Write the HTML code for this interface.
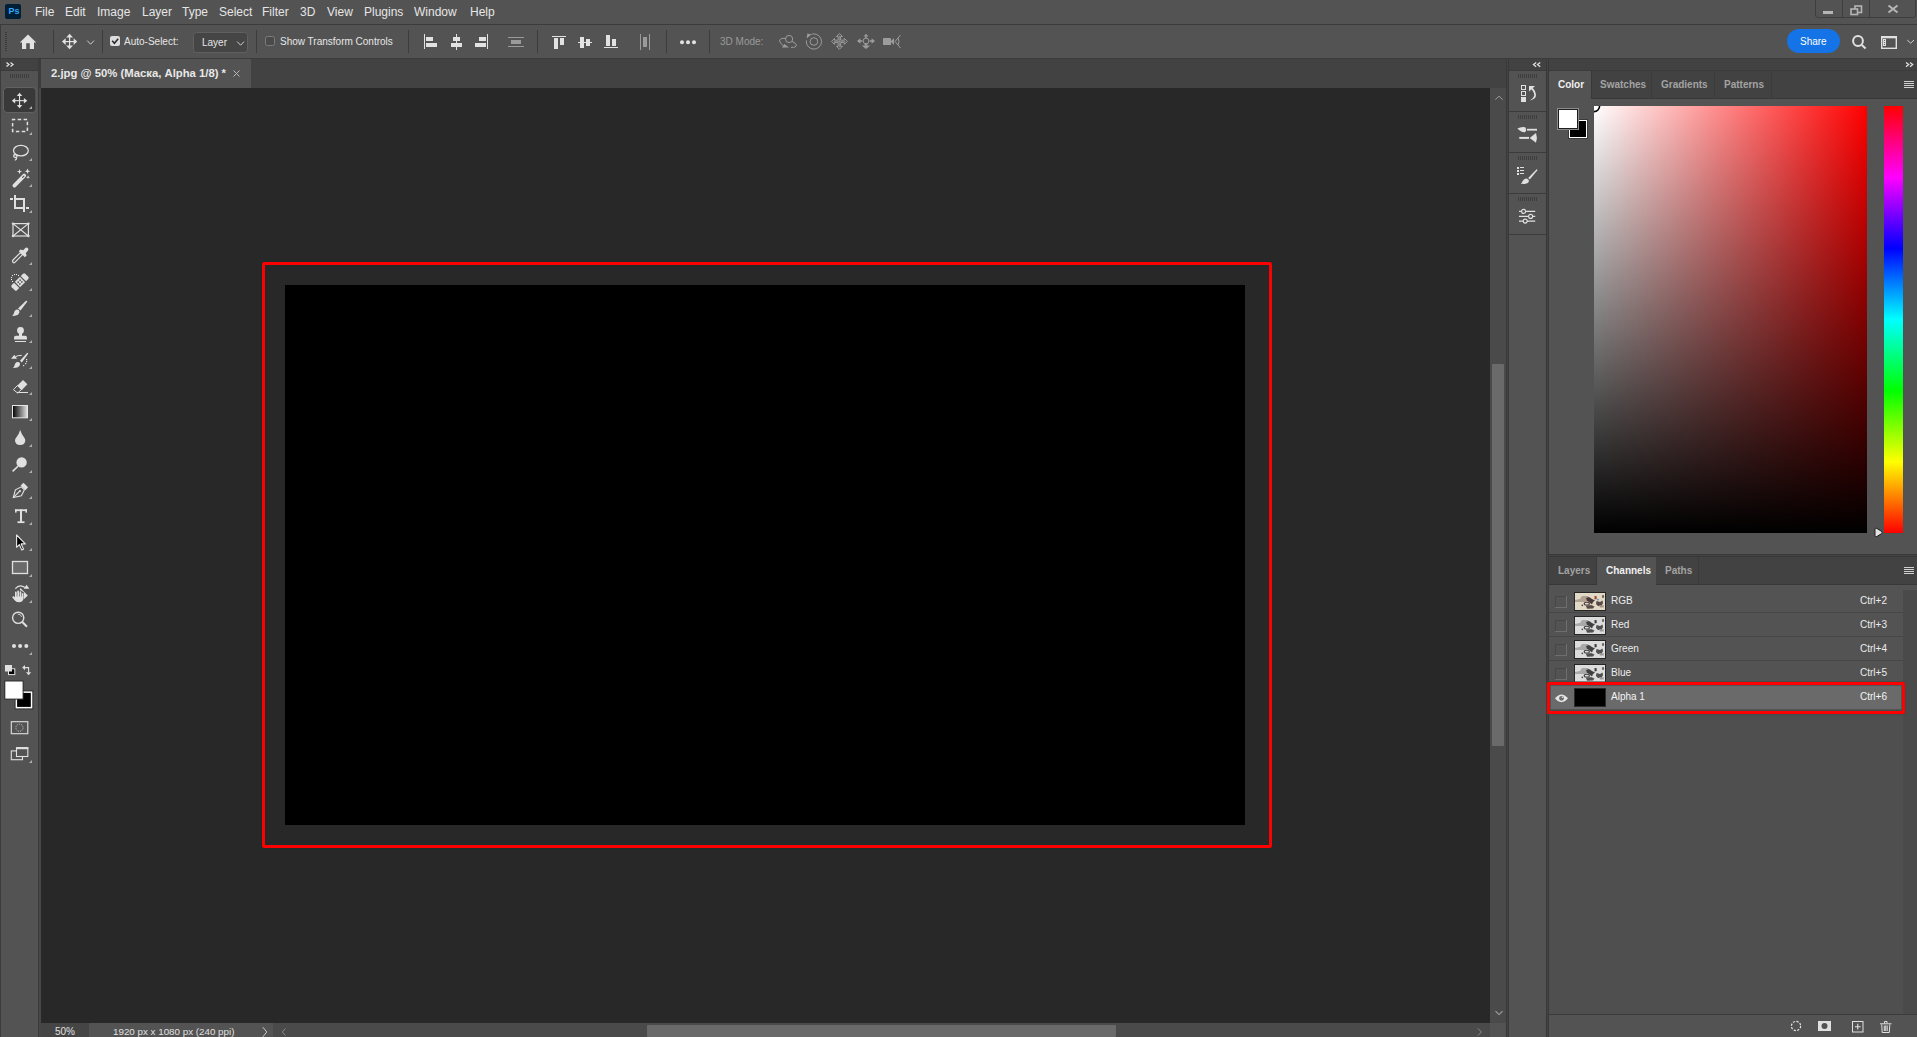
<!DOCTYPE html>
<html><head><meta charset="utf-8">
<style>
*{margin:0;padding:0;box-sizing:border-box}
html,body{width:1917px;height:1037px;overflow:hidden;background:#3b3b3b;font-family:"Liberation Sans",sans-serif;position:relative}
.a{position:absolute}
.t{position:absolute;white-space:nowrap;line-height:1}
svg{position:absolute;overflow:visible}
.menu{top:6px;font-size:12px;color:#e6e6e6}
</style></head><body>
<!-- MENU BAR -->
<div class="a" style="left:0;top:0;width:1917px;height:24px;background:#535353"></div>
<div class="a" style="left:0;top:24px;width:1917px;height:1px;background:#3b3b3b"></div>
<!-- MENU CONTENT -->
<div class="a" style="left:5px;top:4px;width:16px;height:15px;background:#001e36;border-radius:2px"></div>
<div class="t" style="left:8.6px;top:7px;font-size:9px;font-weight:bold;color:#31a8ff;letter-spacing:-0.1px">Ps</div>
<div class="t menu" style="left:35px">File</div>
<div class="t menu" style="left:65px">Edit</div>
<div class="t menu" style="left:97px">Image</div>
<div class="t menu" style="left:142px">Layer</div>
<div class="t menu" style="left:182px">Type</div>
<div class="t menu" style="left:219px">Select</div>
<div class="t menu" style="left:262px">Filter</div>
<div class="t menu" style="left:300px">3D</div>
<div class="t menu" style="left:327px">View</div>
<div class="t menu" style="left:364px">Plugins</div>
<div class="t menu" style="left:414px">Window</div>
<div class="t menu" style="left:470px">Help</div>
<!-- OPTIONS BAR -->
<div class="a" style="left:0;top:25px;width:1917px;height:33px;background:#535353"></div>
<div class="a" style="left:0;top:25px;width:1px;height:33px;background:#3b3b3b"></div>
<div class="a" style="left:0;top:58px;width:1917px;height:1px;background:#3b3b3b"></div>
<!-- OPTIONS CONTENT -->
<svg style="left:0;top:0" width="1917" height="58">
<g fill="#3a3a3a">
<rect x="5" y="32" width="2" height="1"/><rect x="5" y="34" width="2" height="1"/><rect x="5" y="36" width="2" height="1"/><rect x="5" y="38" width="2" height="1"/><rect x="5" y="40" width="2" height="1"/><rect x="5" y="42" width="2" height="1"/><rect x="5" y="44" width="2" height="1"/><rect x="5" y="46" width="2" height="1"/><rect x="5" y="48" width="2" height="1"/><rect x="5" y="50" width="2" height="1"/>
</g>
<polygon fill="#e2e2e2" points="28,34.5 36.2,42.6 34,42.6 34,49 29.8,49 29.8,43.2 26.2,43.2 26.2,49 22,49 22,42.6 19.8,42.6"/>
<g fill="#3c3c3c"><rect x="53" y="30" width="1" height="23"/><rect x="102" y="30" width="1" height="23"/><rect x="256" y="30" width="1" height="23"/><rect x="408" y="30" width="1" height="23"/><rect x="537" y="30" width="1" height="23"/><rect x="666" y="30" width="1" height="23"/><rect x="709" y="30" width="1" height="23"/></g>
<g fill="#e2e2e2">
<rect x="69" y="36" width="1.2" height="11"/><rect x="64" y="41" width="11" height="1.2"/>
<polygon points="69.6,33.8 73,37.4 66.2,37.4"/><polygon points="69.6,49.2 73,45.6 66.2,45.6"/>
<polygon points="62,41.6 65.6,38.2 65.6,45"/><polygon points="77.2,41.6 73.6,38.2 73.6,45"/>
</g>
<polyline points="87.2,40.6 90.6,44.2 94,40.6" fill="none" stroke="#cfcfcf" stroke-width="1"/>
<rect x="110" y="36" width="10" height="10" rx="2" fill="#dcdcdc"/>
<polyline points="112.2,40.8 114.4,43.2 118.2,38.8" fill="none" stroke="#2a2a2a" stroke-width="1.6"/>
<rect x="193.5" y="32.5" width="54" height="20" rx="3" fill="#454545" stroke="#606060" stroke-width="1"/>
<polyline points="237.2,41.6 240.6,45.2 244,41.6" fill="none" stroke="#cfcfcf" stroke-width="1"/>
<rect x="265.5" y="36.5" width="9" height="9" rx="2" fill="#4a4a4a" stroke="#7c7c7c" stroke-width="1"/>
<g fill="#e2e2e2">
<rect x="424" y="34" width="1" height="15"/><rect x="426" y="37" width="7" height="4"/><rect x="426" y="43" width="11" height="4"/>
<rect x="456" y="34" width="1" height="16"/><rect x="453" y="37" width="7" height="4"/><rect x="451" y="43" width="11" height="4"/>
<rect x="487" y="34" width="1" height="15"/><rect x="479" y="37" width="7" height="4"/><rect x="475" y="43" width="11" height="4"/>
<rect x="552" y="36" width="14" height="1"/><rect x="554" y="38" width="4" height="11"/><rect x="560" y="38" width="4" height="7"/>
<rect x="578" y="42" width="14" height="1"/><rect x="580" y="37" width="4" height="11"/><rect x="586" y="39" width="4" height="7"/>
<rect x="606" y="35" width="4" height="11"/><rect x="612" y="39" width="4" height="7"/><rect x="604" y="47" width="14" height="1"/>
<circle cx="682" cy="42.2" r="2"/><circle cx="688" cy="42.2" r="2"/><circle cx="694" cy="42.2" r="2"/>
</g>
<g fill="#9a9a9a">
<rect x="508" y="37" width="16" height="1"/><rect x="511" y="40" width="10" height="4"/><rect x="508" y="46" width="16" height="1"/>
<rect x="640" y="34" width="1" height="16"/><rect x="649" y="34" width="1" height="16"/><rect x="643" y="37" width="4" height="10"/>
</g>
</svg>
<div class="t" style="left:124px;top:37px;font-size:10px;color:#e6e6e6">Auto-Select:</div>
<div class="t" style="left:202px;top:38px;font-size:10px;color:#e6e6e6">Layer</div>
<div class="t" style="left:280px;top:37px;font-size:10px;color:#e6e6e6">Show Transform Controls</div>
<div class="t" style="left:720px;top:37px;font-size:10px;color:#9a9a9a">3D Mode:</div>
<!-- WINDOW CONTROLS & RIGHT OPTS -->
<svg style="left:0;top:0" width="1917" height="58">
<path d="M1815.5,0 V15 Q1815.5,17.5 1818,17.5 H1913 Q1915.5,17.5 1915.5,15 V0" fill="none" stroke="#3e3e3e" stroke-width="1"/>
<rect x="1842" y="0" width="1" height="18" fill="#3e3e3e"/><rect x="1869" y="0" width="1" height="18" fill="#3e3e3e"/>
<rect x="1823" y="11" width="10" height="3" fill="#b5b5b5"/>
<rect x="1855" y="6" width="6.5" height="6.5" fill="none" stroke="#b5b5b5" stroke-width="1.6"/>
<rect x="1851" y="9" width="6.5" height="5.5" fill="#535353" stroke="#b5b5b5" stroke-width="1.6"/>
<path d="M1888.5,5.5 L1897.5,12.5 M1897.5,5.5 L1888.5,12.5" stroke="#b5b5b5" stroke-width="2"/>
<rect x="1787" y="29" width="53" height="24" rx="12" fill="#1473e6"/>
<circle cx="1858" cy="41" r="4.9" fill="none" stroke="#e0e0e0" stroke-width="2"/>
<path d="M1861.8,45 L1865.6,48.6" stroke="#e0e0e0" stroke-width="2"/>
<rect x="1881.7" y="36.7" width="14.6" height="11.6" fill="none" stroke="#e0e0e0" stroke-width="1.4"/>
<rect x="1881" y="36" width="16" height="2.3" fill="#e0e0e0"/>
<rect x="1883" y="39" width="3" height="7" fill="#e0e0e0"/>
<g fill="#535353"><circle cx="1884.5" cy="40.5" r="0.6"/><circle cx="1884.5" cy="42.5" r="0.6"/><circle cx="1884.5" cy="44.5" r="0.6"/></g>
<polyline points="1907.2,40 1910.6,43.2 1914,40" fill="none" stroke="#cfcfcf" stroke-width="1"/>
</svg>
<div class="t" style="left:1800px;top:37px;font-size:10px;color:#ffffff">Share</div>
<!-- 3D ICONS -->
<svg style="left:0;top:0" width="1917" height="58">
<g fill="none" stroke="#9c9c9c" stroke-width="1">
<circle cx="789.1" cy="39" r="3.6"/>
<path d="M785.6,38.4 Q780,37.8 779.6,40.8 Q779.8,43.2 783.2,45.4"/>
<path d="M791,47.4 Q796.6,47.6 796.4,45 Q796,43.2 792,41.4"/>
<circle cx="813.9" cy="41.5" r="7.6" stroke-dasharray="25 8 14.75 0"/>
<circle cx="813.9" cy="41.5" r="3.8"/>
<path d="M839.4,33.5 L842.4,36.5 L840.6,36.5 L840.6,40.2 L844.3,40.2 L844.3,38.4 L847.3,41.4 L844.3,44.4 L844.3,42.6 L840.6,42.6 L840.6,46.3 L842.4,46.3 L839.4,49.3 L836.4,46.3 L838.2,46.3 L838.2,42.6 L834.5,42.6 L834.5,44.4 L831.5,41.4 L834.5,38.4 L834.5,40.2 L838.2,40.2 L838.2,36.5 L836.4,36.5 Z"/>
<path d="M839.4,35.5 V47.3 M833.5,41.4 H845.3" stroke-width="0.7"/>
<circle cx="866" cy="41" r="2.9"/>
<path d="M895,41.5 L900.5,35 M895,41.5 L900.5,48 M898,38 Q900,41.5 898,45" />
</g>
<g fill="#9c9c9c">
<polygon points="782,47.6 789,47.6 784.4,44"/>
<polygon points="806.6,38.6 811.4,34.6 807.4,33.6"/>
<polygon points="866,33.8 868.4,36.6 863.6,36.6"/><rect x="865.2" y="36.4" width="1.6" height="1.6"/>
<polygon points="857,41 860.4,38.2 860.4,43.8"/><rect x="860" y="40.2" width="2.4" height="1.6"/>
<polygon points="875,41 871.6,38.2 871.6,43.8"/><rect x="869.6" y="40.2" width="2.4" height="1.6"/>
<polygon points="866,49 861.8,45.4 870.2,45.4"/><rect x="864.6" y="43.6" width="2.8" height="2"/>
<rect x="883" y="38" width="8" height="7" rx="0.6"/>
<polygon points="890.6,41.5 894,38 894,45"/>
</g>
</svg>
<!-- LEFT TOOLBAR -->
<div class="a" style="left:0;top:58px;width:41px;height:979px;background:#3b3b3b"></div>
<div class="a" style="left:1px;top:59px;width:37px;height:11px;background:#424242"></div>
<div class="a" style="left:1px;top:71px;width:37px;height:966px;background:#535353"></div>
<!-- TOOLBAR CONTENT -->
<svg style="left:0;top:0" width="41" height="1037">
<g fill="none" stroke="#e0e0e0" stroke-width="1.3"><polyline points="6.5,62.5 9,64.5 6.5,66.5"/><polyline points="10.5,62.5 13,64.5 10.5,66.5"/></g>
<g fill="#3e3e3e"><rect x="10" y="74" width="1" height="4"/><rect x="12" y="74" width="1" height="4"/><rect x="14" y="74" width="1" height="4"/><rect x="16" y="74" width="1" height="4"/><rect x="18" y="74" width="1" height="4"/><rect x="20" y="74" width="1" height="4"/><rect x="22" y="74" width="1" height="4"/><rect x="24" y="74" width="1" height="4"/><rect x="26" y="74" width="1" height="4"/><rect x="28" y="74" width="1" height="4"/></g>
<rect x="3.5" y="87.5" width="32.5" height="25" rx="3.5" fill="#393939" stroke="#626262" stroke-width="1"/>
<!-- triangles -->
<g fill="#b0b0b0">
<polygon points="32,106 32,109 29,109"/>
<polygon points="32,132 32,135 29,135"/>
<polygon points="32,158 32,161 29,161"/>
<polygon points="32,184 32,187 29,187"/>
<polygon points="32,210 32,213 29,213"/>
<polygon points="32,262 32,265 29,265"/>
<polygon points="32,288 32,291 29,291"/>
<polygon points="32,314 32,317 29,317"/>
<polygon points="32,340 32,343 29,343"/>
<polygon points="32,366 32,369 29,369"/>
<polygon points="32,392 32,395 29,395"/>
<polygon points="32,418 32,421 29,421"/>
<polygon points="32,444 32,447 29,447"/>
<polygon points="32,470 32,473 29,473"/>
<polygon points="32,496 32,499 29,499"/>
<polygon points="32,522 32,525 29,525"/>
<polygon points="32,548 32,551 29,551"/>
<polygon points="32,574 32,577 29,577"/>
<polygon points="32,600 32,603 29,603"/>
<polygon points="32,652 32,655 29,655"/>
<polygon points="32,760 32,763 29,763"/>
</g>
<g fill="#e0e0e0" stroke="none">
<!-- move -->
<rect x="19" y="95" width="1.1" height="11"/><rect x="14.5" y="100.1" width="10" height="1.1"/>
<polygon points="19.55,92.8 22.3,96.1 16.8,96.1"/><polygon points="19.55,108.2 22.3,105.1 16.8,105.1"/>
<polygon points="11.8,100.65 15.2,97.9 15.2,103.4"/><polygon points="27.3,100.65 23.9,97.9 23.9,103.4"/>
</g>
<!-- marquee -->
<rect x="12.6" y="119.6" width="14.8" height="11.8" fill="none" stroke="#e0e0e0" stroke-width="1.5" stroke-dasharray="3.5,2.4" stroke-dashoffset="0.8"/>
<!-- lasso -->
<g fill="none" stroke="#e0e0e0" stroke-width="1.3">
<ellipse cx="20.9" cy="150.6" rx="7.4" ry="5.3"/>
<path d="M15.5,154.5 C13,154.5 13,157.5 15.5,157.5 C17.5,157.5 17.5,155 15.8,155.5 M16.2,157.2 C17.2,158.2 16.2,160 14.8,160"/>
</g>
<!-- magic wand -->
<g fill="#e0e0e0">
<path d="M14.4,185.6 L24.2,175.6" stroke="#e0e0e0" stroke-width="3.8" stroke-linecap="round"/>
<path d="M19.5,169 L20.2,171 L22.2,171.6 L20.2,172.2 L19.5,174.2 L18.8,172.2 L16.8,171.6 L18.8,171 Z"/>
<path d="M27.5,168.6 L28.3,170.6 L30.3,171.3 L28.3,172 L27.5,174 L26.7,172 L24.7,171.3 L26.7,170.6 Z"/>
<path d="M28,175.3 L28.6,176.7 L30,177.2 L28.6,177.7 L28,179.1 L27.4,177.7 L26,177.2 L27.4,176.7 Z"/>
</g>
<path d="M22.6,177.4 L23.9,176.1" stroke="#535353" stroke-width="1.1" stroke-linecap="round"/>
<!-- crop -->
<g fill="#e0e0e0">
<rect x="10" y="198" width="3" height="2"/><rect x="14" y="195" width="2" height="14"/><rect x="14" y="207" width="11" height="2"/>
<rect x="16" y="198" width="9" height="2"/><rect x="23" y="198" width="2" height="14"/><rect x="26" y="207" width="3" height="2"/>
</g>
<!-- frame -->
<g fill="none" stroke="#e0e0e0" stroke-width="1.2"><rect x="13" y="223.6" width="15.4" height="12.4"/><path d="M13,223.6 L28.4,236 M28.4,223.6 L13,236"/></g>
<g fill="#e0e0e0"><circle cx="13" cy="223.6" r="1.2"/><circle cx="28.4" cy="223.6" r="1.2"/><circle cx="13" cy="236" r="1.2"/><circle cx="28.4" cy="236" r="1.2"/></g>
<!-- eyedropper -->
<path d="M13.2,262.5 Q12,261.2 13,260 L20.5,252.5 L22.6,254.6 L15.1,262.1 Q14.1,263.3 13.2,262.5 Z" fill="none" stroke="#e0e0e0" stroke-width="1.2"/>
<g fill="#e0e0e0"><path d="M18.8,251.2 L20.6,249.4 L23.2,250.2 L25.1,248.3 Q26.8,247 27.9,248.2 Q29,249.3 27.7,251 L25.8,252.9 L26.6,255.5 L24.8,257.3 Z"/></g>
<!-- healing -->
<g transform="rotate(-45 20 282)">
<rect x="10.5" y="278.3" width="19" height="7.4" rx="1.5" fill="#e0e0e0"/>
<rect x="15.3" y="277.5" width="1.2" height="9" fill="#535353"/><rect x="23.5" y="277.5" width="1.2" height="9" fill="#535353"/>
<g fill="#535353"><circle cx="18.6" cy="280.8" r="0.9"/><circle cx="21.4" cy="280.8" r="0.9"/><circle cx="18.6" cy="283.2" r="0.9"/><circle cx="21.4" cy="283.2" r="0.9"/></g>
</g>
<g fill="#ececec"><rect x="12.0" y="275.0" width="1" height="1"/><rect x="14.0" y="274.0" width="1" height="1"/><rect x="16.0" y="274.0" width="1" height="1"/><rect x="18.0" y="275.0" width="1" height="1"/><rect x="11.0" y="277.0" width="1" height="1"/><rect x="11.0" y="279.0" width="1" height="1"/><rect x="12.0" y="281.0" width="1" height="1"/></g>
<!-- brush -->
<g fill="#e0e0e0">
<path d="M18,308.6 L26,300.8 Q27.4,300.6 27.2,301.8 L20.5,310.6 Z"/>
<path d="M17.4,309.6 Q19.8,310 19.4,312.2 Q18.8,315.2 15,315.7 L12,315.9 Q13.4,315 13.9,313.3 Q14.8,309.4 17.4,309.6 Z"/>
</g>
<!-- stamp -->
<g fill="#e0e0e0">
<circle cx="20.5" cy="330.5" r="3.4"/><rect x="19" y="332" width="3" height="4"/>
<path d="M14,337.6 Q14,335.8 16,335.8 L25,335.8 Q27,335.8 27,337.6 L27,339.6 L14,339.6 Z"/>
<rect x="15" y="341" width="11" height="1"/>
</g>
<!-- history brush -->
<g fill="#e0e0e0">
<path d="M20,360.8 L27,352.9 Q28.3,352.7 28,354 L21.8,362.4 Z"/>
<path d="M17.8,361.9 Q20.4,362.2 20,364.4 Q19.3,367.4 15.6,367.8 L12.8,368 Q14,367 14.5,365.4 Q15.3,361.7 17.8,361.9 Z"/>
<polygon points="11,358.7 17,358.7 14.4,354.8"/>
<rect x="26" y="359" width="1.2" height="1.2"/><rect x="26" y="361" width="1.2" height="1.2"/><rect x="25" y="363" width="1.2" height="1.2"/><rect x="23" y="365" width="1.2" height="1.2"/>
</g>
<path d="M15.6,356.6 Q17.6,355.3 21.8,355.4" fill="none" stroke="#e0e0e0" stroke-width="1"/>
<!-- eraser -->
<path d="M13.4,389.6 L17.6,385.4 L21.6,389.4 L17.6,393 Z" fill="none" stroke="#e0e0e0" stroke-width="1"/>
<path d="M17.2,385.8 L23,380 L27.4,384.2 L21.6,390.2 Z" fill="#e0e0e0"/>
<rect x="17" y="392" width="11" height="1" fill="#e0e0e0"/>
<!-- gradient -->
<defs><linearGradient id="gr" x1="0" x2="1"><stop offset="0" stop-color="#000"/><stop offset="1" stop-color="#e6e6e6"/></linearGradient></defs>
<rect x="12.5" y="405.5" width="15" height="12.3" fill="url(#gr)" stroke="#e6e6e6" stroke-width="1"/>
<!-- blur drop -->
<path d="M20.2,430 Q21.5,434 23.8,437 Q25.3,439 25.3,440.3 Q25.3,445 20.2,445 Q15,445 15,440.3 Q15,439 16.6,437 Q19,434 20.2,430 Z" fill="#e0e0e0"/>
<!-- dodge -->
<circle cx="21.6" cy="462.4" r="5.2" fill="#e0e0e0"/>
<path d="M12.6,471.4 L18.2,466" stroke="#e0e0e0" stroke-width="1.6"/>
<!-- pen -->
<g fill="none" stroke="#e0e0e0" stroke-width="1.1">
<path d="M13.3,497.5 L15.4,489.8 L21.4,486.8 L24.4,489.8 L21.4,495.8 Z"/>
<path d="M13.5,497.3 L19.8,491"/>
</g>
<path d="M20.6,485.4 L23.5,482.8 L28,487.3 L25.4,490.2 Z" fill="#e0e0e0"/>
<circle cx="20" cy="491" r="1" fill="#e0e0e0"/>
<!-- type -->
<g fill="#e0e0e0">
<rect x="15" y="509.3" width="12" height="1.8"/><rect x="15" y="509.3" width="1.6" height="3.3"/><rect x="25.4" y="509.3" width="1.6" height="3.3"/>
<rect x="20" y="509.3" width="2" height="13.5"/><rect x="17.5" y="521.3" width="7" height="1.8"/>
</g>
<!-- path selection -->
<path d="M16.6,535 L16.6,547.3 L19.3,544.6 L21.8,550 L23.6,549.2 L21.1,543.9 L25.3,543.9 Z" fill="#000" stroke="#e8e8e8" stroke-width="1.1" stroke-linejoin="round"/>
<!-- rectangle -->
<rect x="12.5" y="561.5" width="15" height="12" fill="#6b6b6b" stroke="#e0e0e0" stroke-width="1.3"/>
<!-- rotate view hand -->
<path d="M15.3,588.6 Q19.5,583.6 25,587.4" fill="none" stroke="#e0e0e0" stroke-width="1.2"/>
<polygon points="23.8,588.8 29.3,588.8 26.6,584.8" fill="#e0e0e0"/>
<polygon points="20.4,588 27.8,595.4 22.3,600.8 17.5,596" fill="#e0e0e0"/>
<path d="M11.4,596.6 L14.6,595.2 L14.6,591.6 L16.8,590.2 L19.6,590 L21.8,591 L23.9,592.6 L23.9,599 Q23.6,603.2 18.6,603.2 Q15,603.2 13.6,600.6 Z" fill="#535353"/>
<g fill="#e0e0e0">
<rect x="15" y="591.6" width="1.7" height="7" rx="0.85"/>
<rect x="17.3" y="590.6" width="1.7" height="8" rx="0.85"/>
<rect x="19.6" y="591.2" width="1.7" height="7.4" rx="0.85"/>
<rect x="21.8" y="593" width="1.6" height="5.6" rx="0.8"/>
<path d="M15,596.5 H23.4 V598.6 Q23.2,602.2 18.8,602.2 Q16,602.2 14.6,600.2 L12.2,597.2 Q12.8,595.8 14.2,596.6 L15,597.4 Z"/>
</g>
<!-- zoom -->
<circle cx="18.2" cy="617.8" r="5.6" fill="none" stroke="#e0e0e0" stroke-width="1.4"/>
<path d="M22.3,622 L27,626.8" stroke="#e0e0e0" stroke-width="2"/>
<path d="M17.6,614.2 A3.6,3.6 0 0 1 21.6,617" fill="none" stroke="#e0e0e0" stroke-width="0.8"/>
<!-- dots -->
<g fill="#e0e0e0"><circle cx="14" cy="645.9" r="2"/><circle cx="20.1" cy="645.9" r="2"/><circle cx="26.3" cy="645.9" r="2"/></g>
<!-- default colors -->
<rect x="8.5" y="668.8" width="6.3" height="5.8" fill="#000" stroke="#e0e0e0" stroke-width="1"/>
<rect x="5" y="665" width="7" height="6.5" fill="#e0e0e0"/>
<!-- swap -->
<g fill="none" stroke="#e0e0e0" stroke-width="1.1"><path d="M24.5,667.6 L28.6,667.6 L28.6,672.5"/></g>
<g fill="#e0e0e0"><polygon points="22.2,667.6 25,665 25,670.2"/><polygon points="28.6,675.3 26,672.3 31.2,672.3"/></g>
<!-- fg/bg -->
<rect x="14.6" y="690.4" width="18.7" height="19" fill="#2e2e2e"/>
<rect x="15.6" y="691.4" width="16.7" height="17" fill="#fff"/>
<rect x="17.1" y="692.9" width="13.7" height="14" fill="#000"/>
<rect x="4.3" y="680.5" width="19.3" height="19.1" fill="#2e2e2e"/>
<rect x="5.3" y="681.5" width="17.3" height="17.1" fill="#fff"/>
<!-- quick mask -->
<rect x="11.3" y="721.7" width="16.5" height="12" fill="none" stroke="#e0e0e0" stroke-width="1.1"/>
<circle cx="19.5" cy="727.7" r="3.6" fill="none" stroke="#e0e0e0" stroke-width="0.9" stroke-dasharray="0.9,1.1"/>
<!-- screen mode -->
<rect x="11.3" y="750.9" width="11.2" height="8.8" fill="none" stroke="#e0e0e0" stroke-width="1.1"/>
<rect x="16.5" y="747.7" width="11.3" height="8.8" fill="#535353" stroke="#e0e0e0" stroke-width="1.1"/>
<rect x="16" y="747.2" width="12.3" height="2" fill="#e0e0e0"/>
</svg>
<div class="a" style="left:39px;top:88px;width:2px;height:949px;background:#474747"></div>
<!-- TAB BAR -->
<div class="a" style="left:41px;top:59px;width:1465px;height:29px;background:#424242"></div>
<div class="a" style="left:41px;top:59px;width:210px;height:29px;background:#535353"></div>
<!-- CANVAS -->
<div class="a" style="left:41px;top:88px;width:1449px;height:935px;background:#282828"></div>
<div class="a" style="left:262px;top:262px;width:1010px;height:586px;border:3px solid #ff0000;border-radius:2px;box-shadow:0 0 0 1px #1f2a2a,inset 0 0 0 1px #1f2a2a"></div>
<div class="a" style="left:285px;top:285px;width:960px;height:540px;background:#000"></div>
<!-- V SCROLL -->
<div class="a" style="left:1490px;top:88px;width:16px;height:935px;background:#4a4a4a"></div>
<div class="a" style="left:1492px;top:364px;width:12px;height:382px;background:#6a6a6a;border-radius:1px"></div>
<!-- STATUS BAR -->
<div class="a" style="left:41px;top:1023px;width:1465px;height:14px;background:#4a4a4a"></div>
<div class="a" style="left:41px;top:1023px;width:48px;height:14px;background:#454545"></div>
<div class="a" style="left:89px;top:1023px;width:184px;height:14px;background:#535353"></div>
<div class="a" style="left:647px;top:1025px;width:469px;height:12px;background:#6a6a6a;border-radius:1px"></div>
<!-- TAB CONTENT -->
<div class="t" style="left:51px;top:68px;font-size:11.3px;font-weight:bold;color:#e8e8e8">2.jpg @ 50% (Маска, Alpha 1/8) *</div>
<svg style="left:0;top:0" width="300" height="90"><path d="M233.5,70.5 L239.5,76.5 M239.5,70.5 L233.5,76.5" stroke="#b8b8b8" stroke-width="1"/></svg>
<!-- STATUS CONTENT -->
<div class="t" style="left:55px;top:1027px;font-size:10px;color:#e0e0e0">50%</div>
<div class="t" style="left:113px;top:1027px;font-size:9.8px;color:#e0e0e0">1920 px x 1080 px (240 ppi)</div>
<div class="a" style="left:1490px;top:1023px;width:16px;height:14px;background:#535353"></div>
<!-- RIGHT DIVIDERS -->
<div class="a" style="left:1506px;top:58px;width:3px;height:979px;background:#383838"></div><div class="a" style="left:1507px;top:58px;width:1px;height:979px;background:#444"></div>
<div class="a" style="left:1509px;top:59px;width:37px;height:11px;background:#424242"></div>
<div class="a" style="left:1509px;top:71px;width:37px;height:966px;background:#535353"></div>
<div class="a" style="left:1546px;top:58px;width:3px;height:979px;background:#383838"></div><div class="a" style="left:1547px;top:58px;width:1px;height:979px;background:#444"></div>
<div class="a" style="left:1549px;top:59px;width:368px;height:11px;background:#424242"></div>
<!-- ICON PANEL CONTENT -->
<div class="a" style="left:1509px;top:111px;width:37px;height:1px;background:#3b3b3b"></div>
<div class="a" style="left:1509px;top:152px;width:37px;height:1px;background:#3b3b3b"></div>
<div class="a" style="left:1509px;top:193px;width:37px;height:1px;background:#3b3b3b"></div>
<div class="a" style="left:1509px;top:234px;width:37px;height:1px;background:#3b3b3b"></div>
<svg style="left:0;top:0" width="1917" height="1037">
<polyline points="1495.3,99.6 1499,96.2 1502.7,99.6" fill="none" stroke="#9a9a9a" stroke-width="1"/>
<polyline points="1495.5,1011.2 1499,1014.6 1502.5,1011.2" fill="none" stroke="#a0a0a0" stroke-width="1.1"/>
<polyline points="262.8,1027.2 266.8,1032 262.8,1036.8" fill="none" stroke="#c8c8c8" stroke-width="1"/>
<polyline points="285.5,1028.5 282.2,1032 285.5,1035.5" fill="none" stroke="#8a8a8a" stroke-width="1"/>
<polyline points="1478,1028.5 1481.3,1032 1478,1035.5" fill="none" stroke="#8a8a8a" stroke-width="1"/>
<g fill="none" stroke="#e0e0e0" stroke-width="1.3"><polyline points="1536.2,62.5 1533.5,64.6 1536.2,66.8"/><polyline points="1540.2,62.5 1537.5,64.6 1540.2,66.8"/>
<polyline points="1906,62.5 1908.7,64.6 1906,66.8"/><polyline points="1910,62.5 1912.7,64.6 1910,66.8"/></g>
<g fill="#3e3e3e">
<rect x="1518" y="74" width="1" height="4"/><rect x="1520" y="74" width="1" height="4"/><rect x="1522" y="74" width="1" height="4"/><rect x="1524" y="74" width="1" height="4"/><rect x="1526" y="74" width="1" height="4"/><rect x="1528" y="74" width="1" height="4"/><rect x="1530" y="74" width="1" height="4"/><rect x="1532" y="74" width="1" height="4"/><rect x="1534" y="74" width="1" height="4"/><rect x="1536" y="74" width="1" height="4"/><rect x="1518" y="115" width="1" height="4"/><rect x="1520" y="115" width="1" height="4"/><rect x="1522" y="115" width="1" height="4"/><rect x="1524" y="115" width="1" height="4"/><rect x="1526" y="115" width="1" height="4"/><rect x="1528" y="115" width="1" height="4"/><rect x="1530" y="115" width="1" height="4"/><rect x="1532" y="115" width="1" height="4"/><rect x="1534" y="115" width="1" height="4"/><rect x="1536" y="115" width="1" height="4"/><rect x="1518" y="156" width="1" height="4"/><rect x="1520" y="156" width="1" height="4"/><rect x="1522" y="156" width="1" height="4"/><rect x="1524" y="156" width="1" height="4"/><rect x="1526" y="156" width="1" height="4"/><rect x="1528" y="156" width="1" height="4"/><rect x="1530" y="156" width="1" height="4"/><rect x="1532" y="156" width="1" height="4"/><rect x="1534" y="156" width="1" height="4"/><rect x="1536" y="156" width="1" height="4"/><rect x="1518" y="197" width="1" height="4"/><rect x="1520" y="197" width="1" height="4"/><rect x="1522" y="197" width="1" height="4"/><rect x="1524" y="197" width="1" height="4"/><rect x="1526" y="197" width="1" height="4"/><rect x="1528" y="197" width="1" height="4"/><rect x="1530" y="197" width="1" height="4"/><rect x="1532" y="197" width="1" height="4"/><rect x="1534" y="197" width="1" height="4"/><rect x="1536" y="197" width="1" height="4"/>
</g>
<g fill="none" stroke="#e0e0e0" stroke-width="1"><rect x="1521.5" y="85.5" width="4" height="4"/><rect x="1521.5" y="91.5" width="4" height="4"/></g>
<rect x="1521" y="97" width="5" height="5" fill="#e0e0e0"/>

<polygon points="1529,85.9 1535,85.9 1529,91.6" fill="#e0e0e0"/><path d="M1531.2,89.2 Q1534.6,92.4 1534.2,95.8 Q1533.4,98.8 1529.8,100.4 Q1536.4,99 1536,94.6 Q1535.6,90.8 1532.6,87.8 Z" fill="#e0e0e0"/>
<g fill="#e0e0e0">
<path d="M1517.4,128.6 Q1521,126.4 1525.2,127.2 Q1527,129.7 1525.2,132.2 Q1521,132.6 1517.4,128.6 Z"/>
<rect x="1527" y="128.8" width="10" height="1.8"/>
<rect x="1519.3" y="136.9" width="9.7" height="2"/>
<path d="M1529.7,137.9 L1536,133 Q1537.8,137.8 1536,142.7 Z"/>
<rect x="1517" y="167" width="2" height="2"/><rect x="1517" y="170" width="2" height="2"/><rect x="1517" y="173" width="2" height="2"/>
<rect x="1520" y="167" width="4" height="1"/><rect x="1520" y="170" width="4" height="1"/><rect x="1520" y="173" width="4" height="1"/>
<path d="M1528.2,178 L1536.4,169.4 Q1537.6,169.2 1537.2,170.4 L1529.8,179.6 Z"/>
<path d="M1527,178.6 L1529,180.6 Q1528.8,183.8 1524.6,184 L1520.8,183.8 Q1522,183 1522.4,181.6 Q1523.6,178.4 1527,178.6 Z"/>
</g>
<g stroke="#e0e0e0" stroke-width="1.1" fill="#535353">
<path d="M1519,211.4 H1535.2 M1519,216.4 H1535.2 M1519,221.1 H1535.2"/>
<circle cx="1523.6" cy="211.4" r="2"/><circle cx="1530.6" cy="216.4" r="2"/><circle cx="1525.2" cy="221.1" r="2"/>
</g>
</svg>
<!-- COLOR PANEL -->
<div class="a" style="left:1549px;top:71px;width:368px;height:28px;background:#424242"></div>
<div class="a" style="left:1549px;top:71px;width:42px;height:28px;background:#535353"></div>
<div class="a" style="left:1549px;top:99px;width:368px;height:455px;background:#535353"></div>
<div class="a" style="left:1549px;top:554px;width:368px;height:3px;background:#383838"></div><div class="a" style="left:1549px;top:555px;width:368px;height:1px;background:#444"></div>
<!-- COLOR CONTENT -->
<div class="a" style="left:1591px;top:71px;width:1px;height:28px;background:#383838"></div>
<div class="a" style="left:1592px;top:98px;width:325px;height:1px;background:#383838"></div>
<div class="a" style="left:1651px;top:71px;width:1px;height:28px;background:#3b3b3b"></div>
<div class="a" style="left:1714px;top:71px;width:1px;height:28px;background:#3b3b3b"></div>
<div class="a" style="left:1771px;top:71px;width:1px;height:28px;background:#3b3b3b"></div>
<div class="t" style="left:1558px;top:80px;font-size:10px;font-weight:bold;color:#f0f0f0">Color</div>
<div class="t" style="left:1600px;top:80px;font-size:10px;font-weight:bold;color:#a2a2a2">Swatches</div>
<div class="t" style="left:1661px;top:80px;font-size:10px;font-weight:bold;color:#a2a2a2">Gradients</div>
<div class="t" style="left:1724px;top:80px;font-size:10px;font-weight:bold;color:#a2a2a2">Patterns</div>
<svg style="left:0;top:0" width="1917" height="1037">
<g fill="#d0d0d0"><rect x="1904" y="81" width="10" height="1"/><rect x="1904" y="83" width="10" height="1"/><rect x="1904" y="85" width="10" height="1"/><rect x="1904" y="87" width="10" height="1"/>
</g>
</svg>
<div class="a" style="left:1568px;top:119px;width:20px;height:20px;background:#3a3a3a"></div>
<div class="a" style="left:1569px;top:120px;width:18px;height:18px;background:#fff"></div>
<div class="a" style="left:1570px;top:121px;width:16px;height:16px;background:#000"></div>
<div class="a" style="left:1557px;top:108px;width:22px;height:22px;background:#8c8c8c"></div>
<div class="a" style="left:1558px;top:109px;width:20px;height:20px;background:#1e1e1e"></div>
<div class="a" style="left:1559px;top:110px;width:18px;height:18px;background:#fff"></div>
<div class="a" style="left:1594px;top:106px;width:273px;height:427px;background:linear-gradient(to bottom,rgba(0,0,0,0),#000),linear-gradient(to right,#fff,#f00)"></div>
<div class="a" style="left:1883px;top:105px;width:21px;height:429px;background:#4a5656"></div>
<div class="a" style="left:1884px;top:106px;width:19px;height:427px;background:linear-gradient(to bottom,#f00 0%,#f0f 16.67%,#00f 33.33%,#0ff 50%,#0f0 66.67%,#ff0 83.33%,#f00 100%)"></div>
<svg style="left:0;top:0" width="1917" height="1037">
<path d="M1594,111.6 A5.6,5.6 0 0 0 1599.6,106" fill="none" stroke="#000" stroke-width="1.6"/>
<path d="M1875,529.5 Q1875,527.6 1876.8,528.4 L1881.6,531.4 Q1882.6,532.5 1881.6,533.6 L1876.8,536.6 Q1875,537.4 1875,535.5 Z" fill="#e2e2e2" stroke="#1e1e1e" stroke-width="1"/>
</svg>
<!-- CHANNELS PANEL -->
<div class="a" style="left:1549px;top:557px;width:368px;height:28px;background:#424242"></div>
<div class="a" style="left:1597px;top:557px;width:59px;height:28px;background:#535353"></div>
<div class="a" style="left:1549px;top:585px;width:368px;height:452px;background:#535353"></div>
<!-- CHANNELS CONTENT -->
<div class="a" style="left:1656px;top:557px;width:42px;height:28px;background:#424242"></div>
<div class="a" style="left:1698px;top:557px;width:1px;height:28px;background:#3b3b3b"></div>
<div class="a" style="left:1596px;top:557px;width:1px;height:28px;background:#383838"></div>
<div class="a" style="left:1549px;top:584px;width:47px;height:1px;background:#383838"></div><div class="a" style="left:1656px;top:584px;width:261px;height:1px;background:#383838"></div>
<div class="t" style="left:1558px;top:566px;font-size:10px;font-weight:bold;color:#a2a2a2">Layers</div>
<div class="t" style="left:1606px;top:566px;font-size:10px;font-weight:bold;color:#f0f0f0">Channels</div>
<div class="t" style="left:1665px;top:566px;font-size:10px;font-weight:bold;color:#a2a2a2">Paths</div>
<div class="a" style="left:1549px;top:714px;width:354px;height:300px;background:#4f4f4f"></div>
<div class="a" style="left:1903px;top:590px;width:14px;height:424px;background:#4a4a4a"></div>
<div class="a" style="left:1549px;top:1014px;width:368px;height:1px;background:#3b3b3b"></div>
<svg style="left:0;top:0" width="1917" height="1037">
<defs>
<linearGradient id="th0" x1="0" y1="0" x2="1" y2="1"><stop offset="0" stop-color="#d8c8b4"/><stop offset="0.5" stop-color="#9a8070"/><stop offset="1" stop-color="#c8b8a8"/></linearGradient>
<linearGradient id="th1" x1="0" y1="0" x2="1" y2="1"><stop offset="0" stop-color="#e0e0e0"/><stop offset="0.5" stop-color="#8a8a8a"/><stop offset="1" stop-color="#d0d0d0"/></linearGradient>
</defs>
<rect x="1555" y="596" width="12" height="1" fill="#474747"/><rect x="1555" y="596" width="1" height="12" fill="#474747"/><rect x="1566" y="596" width="1" height="12" fill="#6e6e6e"/><rect x="1555" y="607" width="12" height="1" fill="#6e6e6e"/>
<rect x="1549" y="612" width="354" height="1" fill="#474747"/>
<rect x="1555" y="620" width="12" height="1" fill="#474747"/><rect x="1555" y="620" width="1" height="12" fill="#474747"/><rect x="1566" y="620" width="1" height="12" fill="#6e6e6e"/><rect x="1555" y="631" width="12" height="1" fill="#6e6e6e"/>
<rect x="1549" y="636" width="354" height="1" fill="#474747"/>
<rect x="1555" y="644" width="12" height="1" fill="#474747"/><rect x="1555" y="644" width="1" height="12" fill="#474747"/><rect x="1566" y="644" width="1" height="12" fill="#6e6e6e"/><rect x="1555" y="655" width="12" height="1" fill="#6e6e6e"/>
<rect x="1549" y="660" width="354" height="1" fill="#474747"/>
<rect x="1555" y="668" width="12" height="1" fill="#474747"/><rect x="1555" y="668" width="1" height="12" fill="#474747"/><rect x="1566" y="668" width="1" height="12" fill="#6e6e6e"/><rect x="1555" y="679" width="12" height="1" fill="#6e6e6e"/>
<rect x="1549" y="684" width="354" height="1" fill="#474747"/>
<g transform="translate(1575,593)"><rect x="-1" y="-1" width="32" height="19" fill="#262626"/><rect x="0" y="0" width="30" height="17" fill="#e2d8c6"/><path d="M0,7 L5,6 L7,3 L13,3 L15,6 L11,9 L0,9 Z" fill="#a49484" opacity="0.8"/><path d="M11,5 L14,4 L17,6 L20,7.5 L18,9 L17,11.5 L14,9 L12,8 Z" fill="#4a3a3a"/><path d="M19.5,3 L21.5,3 L21.8,6 L19.5,6.5 Z" fill="#a04a30"/><path d="M27.5,2 L29,2.5 L28.5,5 L27,4.5 Z" fill="#4a3a3a"/><path d="M21.5,8 L25,9 L27.5,7.5 L28,10 L26.5,13 L23,13 L21,11 Z" fill="#4a3a3a" opacity="0.9"/><path d="M11,13 L16,12 L19.5,13.5 L18,15.5 L12,15.7 Z" fill="#4a3a3a" opacity="0.9"/><ellipse cx="11.8" cy="10.7" rx="2.6" ry="1.4" fill="none" stroke="#4a3a3a" stroke-width="1.1"/><path d="M24,12 L29,12.5 L28.5,14.5 L25,14.6 Z" fill="#a49484"/><circle cx="7.3" cy="12.4" r="0.8" fill="#4a3a3a"/><circle cx="23" cy="6.6" r="0.9" fill="#5a8ac0"/></g><g transform="translate(1575,617)"><rect x="-1" y="-1" width="32" height="19" fill="#262626"/><rect x="0" y="0" width="30" height="17" fill="#dcdcdc"/><path d="M0,7 L5,6 L7,3 L13,3 L15,6 L11,9 L0,9 Z" fill="#9c9c9c" opacity="0.8"/><path d="M11,5 L14,4 L17,6 L20,7.5 L18,9 L17,11.5 L14,9 L12,8 Z" fill="#404040"/><path d="M19.5,3 L21.5,3 L21.8,6 L19.5,6.5 Z" fill="#404040"/><path d="M27.5,2 L29,2.5 L28.5,5 L27,4.5 Z" fill="#404040"/><path d="M21.5,8 L25,9 L27.5,7.5 L28,10 L26.5,13 L23,13 L21,11 Z" fill="#404040" opacity="0.9"/><path d="M11,13 L16,12 L19.5,13.5 L18,15.5 L12,15.7 Z" fill="#404040" opacity="0.9"/><ellipse cx="11.8" cy="10.7" rx="2.6" ry="1.4" fill="none" stroke="#404040" stroke-width="1.1"/><path d="M24,12 L29,12.5 L28.5,14.5 L25,14.6 Z" fill="#9c9c9c"/><circle cx="7.3" cy="12.4" r="0.8" fill="#404040"/></g><g transform="translate(1575,641)"><rect x="-1" y="-1" width="32" height="19" fill="#262626"/><rect x="0" y="0" width="30" height="17" fill="#dcdcdc"/><path d="M0,7 L5,6 L7,3 L13,3 L15,6 L11,9 L0,9 Z" fill="#9c9c9c" opacity="0.8"/><path d="M11,5 L14,4 L17,6 L20,7.5 L18,9 L17,11.5 L14,9 L12,8 Z" fill="#404040"/><path d="M19.5,3 L21.5,3 L21.8,6 L19.5,6.5 Z" fill="#404040"/><path d="M27.5,2 L29,2.5 L28.5,5 L27,4.5 Z" fill="#404040"/><path d="M21.5,8 L25,9 L27.5,7.5 L28,10 L26.5,13 L23,13 L21,11 Z" fill="#404040" opacity="0.9"/><path d="M11,13 L16,12 L19.5,13.5 L18,15.5 L12,15.7 Z" fill="#404040" opacity="0.9"/><ellipse cx="11.8" cy="10.7" rx="2.6" ry="1.4" fill="none" stroke="#404040" stroke-width="1.1"/><path d="M24,12 L29,12.5 L28.5,14.5 L25,14.6 Z" fill="#9c9c9c"/><circle cx="7.3" cy="12.4" r="0.8" fill="#404040"/></g><g transform="translate(1575,665)"><rect x="-1" y="-1" width="32" height="19" fill="#262626"/><rect x="0" y="0" width="30" height="17" fill="#dcdcdc"/><path d="M0,7 L5,6 L7,3 L13,3 L15,6 L11,9 L0,9 Z" fill="#9c9c9c" opacity="0.8"/><path d="M11,5 L14,4 L17,6 L20,7.5 L18,9 L17,11.5 L14,9 L12,8 Z" fill="#404040"/><path d="M19.5,3 L21.5,3 L21.8,6 L19.5,6.5 Z" fill="#404040"/><path d="M27.5,2 L29,2.5 L28.5,5 L27,4.5 Z" fill="#404040"/><path d="M21.5,8 L25,9 L27.5,7.5 L28,10 L26.5,13 L23,13 L21,11 Z" fill="#404040" opacity="0.9"/><path d="M11,13 L16,12 L19.5,13.5 L18,15.5 L12,15.7 Z" fill="#404040" opacity="0.9"/><ellipse cx="11.8" cy="10.7" rx="2.6" ry="1.4" fill="none" stroke="#404040" stroke-width="1.1"/><path d="M24,12 L29,12.5 L28.5,14.5 L25,14.6 Z" fill="#9c9c9c"/><circle cx="7.3" cy="12.4" r="0.8" fill="#404040"/></g><g fill="#d0d0d0"><rect x="1904" y="567" width="10" height="1"/><rect x="1904" y="569" width="10" height="1"/><rect x="1904" y="571" width="10" height="1"/><rect x="1904" y="573" width="10" height="1"/></g>
<rect x="1549" y="685" width="354" height="24" fill="#6a6a6a"/>
<rect x="1574.5" y="688.5" width="31" height="18" fill="#000" stroke="#2a2a2a" stroke-width="1"/>
<path d="M1555,698.3 Q1561.5,690.5 1568,698.3 Q1561.5,706 1555,698.3 Z" fill="#e6e6e6"/>
<circle cx="1561.5" cy="698.3" r="2.4" fill="#6a6a6a"/><circle cx="1562.3" cy="697.3" r="0.7" fill="#e6e6e6"/>
<path d="M1548.5,683.5 H1903.5 V712.5 H1548.5 Z" fill="none" stroke="#3a4848" stroke-width="5" stroke-linejoin="round" opacity="0.6"/>
<path d="M1548.5,683.5 H1903.5 V712.5 H1548.5 Z" fill="none" stroke="#ff0000" stroke-width="3" stroke-linejoin="round"/>
<!-- bottom icons -->
<circle cx="1796" cy="1026" r="4.6" fill="none" stroke="#e6e6e6" stroke-width="1.2" stroke-dasharray="2.2,1.4"/>
<rect x="1818" y="1021" width="13" height="10" fill="#e0e0e0"/><circle cx="1824.5" cy="1026" r="3" fill="#535353"/>
<rect x="1852.5" y="1021.5" width="10.5" height="10.5" fill="none" stroke="#e0e0e0" stroke-width="1"/>
<path d="M1857.75,1023.8 V1029.6 M1854.9,1026.7 H1860.6" stroke="#e0e0e0" stroke-width="1.1"/>
<g fill="none" stroke="#e0e0e0" stroke-width="1"><path d="M1881.7,1024.5 L1882.2,1032.5 H1889.3 L1889.8,1024.5"/><path d="M1880,1023.8 H1891.5"/><path d="M1884.5,1023.5 V1021.5 H1887 V1023.5"/><path d="M1884.3,1025.5 V1031 M1885.75,1025.5 V1031 M1887.2,1025.5 V1031"/></g>
</svg>
<div class="t" style="left:1611px;top:596px;font-size:10px;color:#ececec">RGB</div>
<div class="t" style="left:1860px;top:596px;font-size:10px;color:#ececec">Ctrl+2</div>
<div class="t" style="left:1611px;top:620px;font-size:10px;color:#ececec">Red</div>
<div class="t" style="left:1860px;top:620px;font-size:10px;color:#ececec">Ctrl+3</div>
<div class="t" style="left:1611px;top:644px;font-size:10px;color:#ececec">Green</div>
<div class="t" style="left:1860px;top:644px;font-size:10px;color:#ececec">Ctrl+4</div>
<div class="t" style="left:1611px;top:668px;font-size:10px;color:#ececec">Blue</div>
<div class="t" style="left:1860px;top:668px;font-size:10px;color:#ececec">Ctrl+5</div>
<div class="t" style="left:1611px;top:692px;font-size:10px;color:#f4f4f4">Alpha 1</div>
<div class="t" style="left:1860px;top:692px;font-size:10px;color:#f4f4f4">Ctrl+6</div>
</body></html>
